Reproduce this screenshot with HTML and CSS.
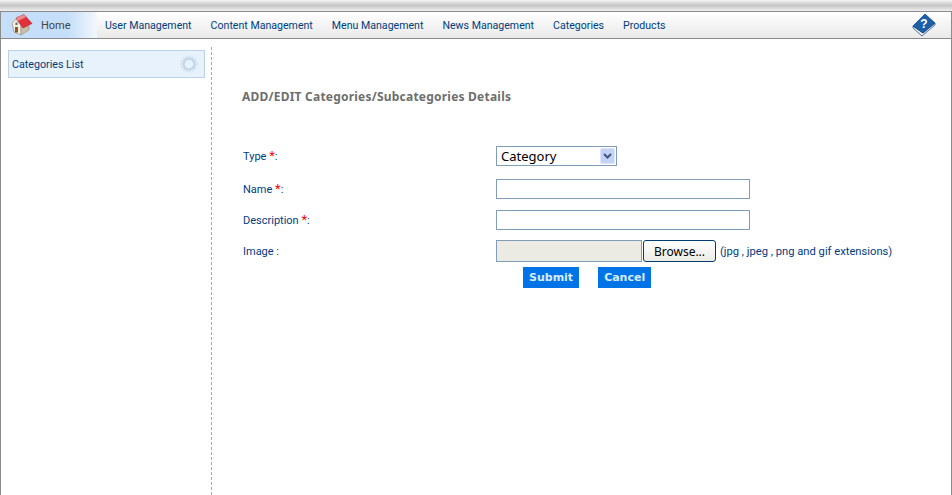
FILE: index.html
```html
<!DOCTYPE html>
<html lang="en">
<head>
    <meta charset="UTF-8">
    <meta name="viewport" content="width=device-width, initial-scale=1.0">
    <title>Categories</title>
    <link rel="stylesheet" href="styles.css">
</head>
<body>
    <div class="top-strip"></div>
    <div class="page">
        <div class="navbar">
            <a class="nav-home" href="#">
                <svg class="home-icon" width="24" height="24" viewBox="0 0 24 24">
                    <path d="M2 10 L6 6 L11 12 L11 22 L4 19 Z" fill="#f3ecdf" stroke="#8d8273" stroke-width="0.6"/>
                    <path d="M11 12 L19 13 L19 17 L11 22 Z" fill="#c9bda9" stroke="#8d8273" stroke-width="0.5"/>
                    <path d="M6 5 L14 1.5 L22 10.5 L13 15 Z" fill="#e2303c" stroke="#b01f2b" stroke-width="0.6"/>
                    <path d="M6 5 L14 1.5 L16 4 L8 8 Z" fill="#f28a90"/>
                    <rect x="5" y="14" width="3" height="5.5" fill="#8a5a2c"/>
                    <rect x="5.5" y="9.5" width="2" height="2.5" fill="#6b6b6b"/>
                </svg>
                <span>Home</span>
            </a>
            <a class="nav-link" href="#">User Management</a>
            <a class="nav-link" href="#">Content Management</a>
            <a class="nav-link" href="#">Menu Management</a>
            <a class="nav-link" href="#">News Management</a>
            <a class="nav-link" href="#">Categories</a>
            <a class="nav-link" href="#">Products</a>
            <a class="nav-help" href="#">
                <svg width="24" height="24" viewBox="0 0 24 24">
                    <path d="M1 13 L1 15 L10 23 L23 12 L23 10 L11 20 Z" fill="#eef2f6" stroke="#2a4f7c" stroke-width="0.8" stroke-linejoin="round"/>
                    <path d="M1 13 L13 1 L23 10 L11 20 Z" fill="#1c5ea8" stroke="#134a8a" stroke-width="0.8" stroke-linejoin="round"/>
                    <text class="help-mark" x="12" y="15" text-anchor="middle">?</text>
                </svg>
            </a>
        </div>

        <div class="content">
            <div class="sidebar">
                <div class="side-box">
                    <span>Categories List</span>
                    <svg width="18" height="18" viewBox="0 0 18 18">
                        <circle cx="9" cy="9" r="5.5" fill="none" stroke="#c3d6ea" stroke-width="2.4"/>
                        <circle cx="9" cy="9" r="7.5" fill="none" stroke="#cfdeee" stroke-width="2.4" stroke-dasharray="1.6 1.6"/>
                    </svg>
                </div>
            </div>

            <div class="main">
                <h2>ADD/EDIT Categories/Subcategories Details</h2>
                <form class="edit-form">
                    <label>Type <em>*</em>:</label>
                    <div class="select-wrap">
                        <select>
                            <option>Category</option>
                        </select>
                        <svg class="select-arrow" width="15" height="16" viewBox="0 0 15 16">
                            <rect x="0.5" y="0.5" width="14" height="15" rx="1.5" fill="#c3d2f5" stroke="#dbe4fa"/>
                            <path d="M4 6 L7.5 9.5 L11 6" fill="none" stroke="#3d5588" stroke-width="2"/>
                        </svg>
                    </div>

                    <label>Name <em>*</em>:</label>
                    <input class="text-input" type="text">

                    <label>Description <em>*</em>:</label>
                    <input class="text-input" type="text">

                    <label class="image-label">Image :</label>
                    <div class="file-row">
                        <input class="file-name" type="text" disabled>
                        <button class="browse" type="button">Browse...</button>
                        <span class="hint">(jpg , jpeg , png and gif extensions)</span>
                    </div>

                    <div class="actions">
                        <button class="action" type="button">Submit</button>
                        <button class="action" type="button">Cancel</button>
                    </div>
                </form>
            </div>
        </div>
    </div>
</body>
</html>
```

FILE: styles.css
```css
html, body {
    margin: 0;
    height: 100%;
}

body {
    font-family: Roboto, "Noto Sans", sans-serif;
    font-size: 11px;
    color: #003c80;
    background-color: #ffffff;
    overflow: hidden;
}

.top-strip {
    height: 11px;
    background: linear-gradient(to bottom, #f4f4f4 0, #c4c4c4 50%, #f0f0f0 100%);
}

.page {
    height: 484px;
    box-sizing: border-box;
    border-left: 1px solid #8c8c8c;
    border-right: 1px solid #8c8c8c;
}

.navbar {
    display: flex;
    align-items: center;
    height: 28px;
    box-sizing: border-box;
    border-top: 1px solid #8a8a8a;
    border-bottom: 1px solid #8a8a8a;
    background: linear-gradient(to bottom, #ffffff, #e9e9e9);
}

.navbar a {
    text-decoration: none;
}

.nav-home {
    display: flex;
    align-items: center;
    width: 96px;
    height: 100%;
    box-sizing: border-box;
    padding-left: 9px;
    color: #444444;
    background: linear-gradient(to right, #c5dffa 0, #c5dffa 70%, #f4f7fa 100%);
}

.home-icon {
    margin-right: 7px;
}

.nav-link {
    margin-left: 8px;
    margin-right: 11px;
    padding-top: 1px;
    font-size: 10.6px;
    color: #003c80;
    white-space: nowrap;
}

.nav-help {
    display: flex;
    margin-left: auto;
    margin-right: 15px;
}

.help-mark {
    font-family: "Liberation Sans", sans-serif;
    font-size: 12px;
    font-weight: bold;
    fill: #ffffff;
}

.content {
    display: flex;
    height: 456px;
}

.sidebar {
    width: 211px;
    box-sizing: border-box;
    margin-top: 8px;
    padding: 3px 6px 0 7px;
    border-right: 1px dashed #a8a8a8;
}

.side-box {
    display: flex;
    align-items: center;
    justify-content: space-between;
    height: 28px;
    box-sizing: border-box;
    padding: 0 6px 0 3px;
    font-size: 10.7px;
    background-color: #e8f2fd;
    border: 1px solid #b9d2ea;
}

.main {
    flex: 1;
    padding-left: 30px;
}

h2 {
    margin: 50px 0 0 0;
    font-family: "Noto Sans", sans-serif;
    font-size: 12px;
    line-height: 16px;
    font-weight: bold;
    letter-spacing: 0.22px;
    color: #6e6e6e;
}

.edit-form {
    display: grid;
    grid-template-columns: 253px 1fr;
    grid-template-rows: 33px 31px 30px 27px auto;
    margin-top: 41px;
    padding-left: 1px;
    align-items: start;
}

.edit-form label {
    line-height: 22px;
}

.edit-form .image-label {
    padding-top: 1px;
}

.edit-form em {
    font-style: normal;
    font-size: 13px;
    line-height: 10px;
    color: #ff0000;
}

.select-wrap {
    position: relative;
    width: 121px;
    height: 20px;
}

select {
    width: 121px;
    height: 20px;
    box-sizing: border-box;
    padding: 0 0 0 4px;
    border: 1px solid #7f9db9;
    border-radius: 0;
    background-color: #ffffff;
    font-family: "Noto Sans", sans-serif;
    font-size: 13px;
    color: #000000;
    appearance: none;
}

.select-arrow {
    position: absolute;
    top: 2px;
    right: 2px;
    pointer-events: none;
}

.text-input {
    width: 254px;
    height: 20px;
    box-sizing: border-box;
    margin: 0;
    padding: 0;
    border: 1px solid #7f9db9;
}

.file-row {
    display: flex;
    align-items: center;
    height: 22px;
}

.file-name {
    width: 146px;
    height: 22px;
    box-sizing: border-box;
    margin: 0;
    border: 1px solid #7f9db9;
    background-color: #ebebe4;
}

.browse {
    width: 73px;
    height: 22px;
    margin: 0 4px 0 1px;
    padding: 0;
    border: 1px solid #003c74;
    border-radius: 3px;
    background: linear-gradient(to bottom, #ffffff, #ecebe4);
    font-family: "Noto Sans", sans-serif;
    font-size: 12px;
    color: #000000;
}

.hint {
    font-size: 11.2px;
    white-space: nowrap;
}

.actions {
    grid-column: 2;
    display: flex;
    gap: 19px;
    padding-left: 27px;
}

.action {
    height: 21px;
    padding: 0 6px;
    border: none;
    background-color: #0073e6;
    font-family: "DejaVu Sans", sans-serif;
    font-size: 11px;
    font-weight: bold;
    color: #d8ecff;
}
```
